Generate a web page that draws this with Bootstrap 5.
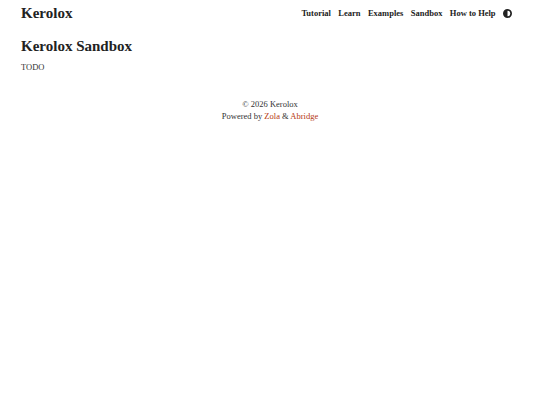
<!DOCTYPE html>
<html lang="en">
<head>
<meta charset="utf-8">
<title>Kerolox Sandbox</title>
<link href="https://cdn.jsdelivr.net/npm/bootstrap@5.3.0/dist/css/bootstrap.min.css" rel="stylesheet">
<style>
body { font-family: "Liberation Serif", "Times New Roman", serif; font-size: 8.5px; color: #333; background: #fff; line-height: 1.2; }
.site-wrap { padding: 0 21px; background: #fff; }
.site-top { height: 26px; padding-right: 7px; }
.site-brand { font-size: 15px; font-weight: 700; color: #222; text-decoration: none; }
.site-links { gap: 7.4px; }
.site-links a { font-size: 8.5px; font-weight: 700; color: #222; text-decoration: none; }
.site-links svg { margin-top: 1px; }
.page-head { font-size: 15px; font-weight: 700; margin: 11px 0 7px; line-height: 1.2; color: #222; }
.page-text { font-size: 8.5px; margin: 0; }
.site-foot { margin-top: 26px; font-size: 8.5px; text-align: center; line-height: 12px; }
.site-foot a { color: #b5360f; text-decoration: none; }
</style>
</head>
<body>
<div class="site-wrap">
  <header class="site-top d-flex justify-content-between align-items-center">
    <a class="site-brand" href="#">Kerolox</a>
    <nav class="site-links d-flex align-items-center">
      <a href="#">Tutorial</a><a href="#">Learn</a><a href="#">Examples</a><a href="#">Sandbox</a><a href="#">How to Help</a>
      <svg width="9" height="9" viewBox="0 0 16 16" aria-hidden="true"><path fill="#222" d="M8 0a8 8 0 1 0 0 16A8 8 0 0 0 8 0zM8 3a5 5 0 0 1 0 10z" fill-rule="evenodd"/></svg>
    </nav>
  </header>
  <main>
    <h1 class="page-head">Kerolox Sandbox</h1>
    <p class="page-text">TODO</p>
  </main>
  <footer class="site-foot">
    <div>© 2026 Kerolox</div>
    <div>Powered by <a href="#">Zola</a> &amp; <a href="#">Abridge</a></div>
  </footer>
</div>
<script src="https://cdn.jsdelivr.net/npm/bootstrap@5.3.0/dist/js/bootstrap.bundle.min.js"></script>
</body>
</html>
